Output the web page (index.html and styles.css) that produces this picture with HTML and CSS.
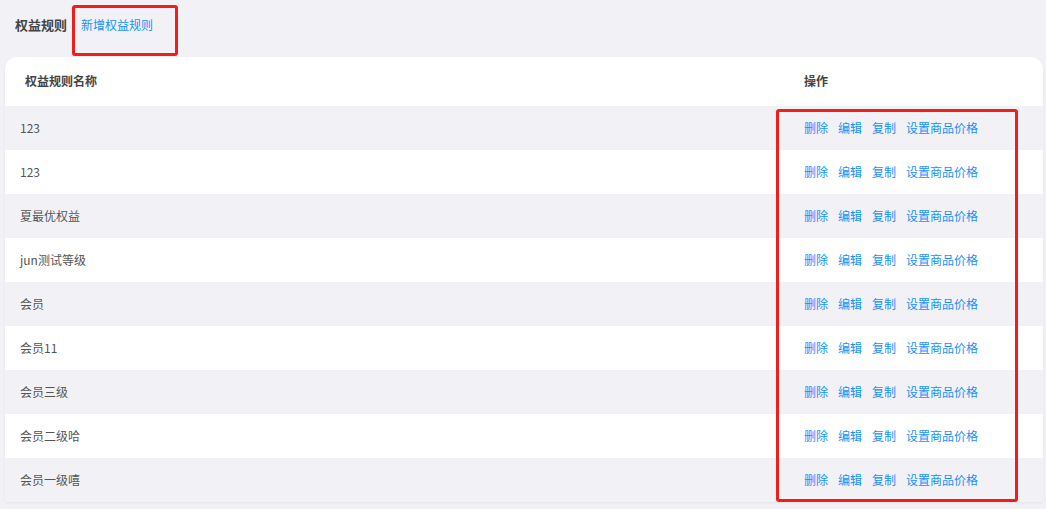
FILE: index.html
```html
<!DOCTYPE html>
<html lang="zh-CN">
  <head>
    <meta charset="UTF-8" />
    <meta name="viewport" content="width=device-width, initial-scale=1.0" />
    <title>权益规则</title>
    <link rel="stylesheet" href="styles.css">
  </head>
  <body>
    <div class="top">
      <span class="title">权益规则</span>
      <a class="add">新增权益规则</a>
    </div>

    <div class="card">
      <div class="row head">
        <div class="name">权益规则名称</div>
        <div class="ops">操作</div>
      </div>
      <div class="row odd">
        <div class="name">123</div>
        <div class="ops"><a>删除</a><a>编辑</a><a>复制</a><a>设置商品价格</a></div>
      </div>
      <div class="row">
        <div class="name">123</div>
        <div class="ops"><a>删除</a><a>编辑</a><a>复制</a><a>设置商品价格</a></div>
      </div>
      <div class="row odd">
        <div class="name">夏最优权益</div>
        <div class="ops"><a>删除</a><a>编辑</a><a>复制</a><a>设置商品价格</a></div>
      </div>
      <div class="row">
        <div class="name">jun测试等级</div>
        <div class="ops"><a>删除</a><a>编辑</a><a>复制</a><a>设置商品价格</a></div>
      </div>
      <div class="row odd">
        <div class="name">会员</div>
        <div class="ops"><a>删除</a><a>编辑</a><a>复制</a><a>设置商品价格</a></div>
      </div>
      <div class="row">
        <div class="name">会员11</div>
        <div class="ops"><a>删除</a><a>编辑</a><a>复制</a><a>设置商品价格</a></div>
      </div>
      <div class="row odd">
        <div class="name">会员三级</div>
        <div class="ops"><a>删除</a><a>编辑</a><a>复制</a><a>设置商品价格</a></div>
      </div>
      <div class="row">
        <div class="name">会员二级哈</div>
        <div class="ops"><a>删除</a><a>编辑</a><a>复制</a><a>设置商品价格</a></div>
      </div>
      <div class="row odd">
        <div class="name">会员一级嘻</div>
        <div class="ops"><a>删除</a><a>编辑</a><a>复制</a><a>设置商品价格</a></div>
      </div>
    </div>

    <div class="mark mark-add"></div>
    <div class="mark mark-ops"></div>
  </body>
</html>
```

FILE: styles.css
```css
* {
  margin: 0px;
  padding: 0px;
  box-sizing: border-box;
}

body {
  background-color: #f2f2f6;
  font-family: "Noto Sans CJK SC", "Noto Sans", sans-serif;
  font-size: 12px;
  color: #555;
  position: relative;
  height: 509px;
  overflow: hidden;
}

.top {
  height: 57px;
  display: flex;
  align-items: center;
  padding-left: 15px;
  padding-bottom: 8px;
}

.title {
  font-size: 13px;
  font-weight: bold;
  color: #444;
}

.add {
  margin-left: 14px;
  color: #1890ff;
}

.card {
  margin-left: 5px;
  margin-right: 3px;
  background-color: #fff;
  border-radius: 12px 12px 0px 0px;
  box-shadow: 0px 1px 3px rgba(0, 0, 0, 0.06);
}

.row {
  display: flex;
  align-items: center;
  height: 44px;
  padding-bottom: 2px;
}

.row.odd {
  background-color: #f2f2f6;
}

.row.head {
  height: 49px;
  font-weight: bold;
  color: #444;
}

.name {
  width: 799px;
  padding-left: 15px;
}

.head .name {
  padding-left: 20px;
}

.ops {
  display: flex;
  gap: 10px;
}

.ops a {
  color: #1890ff;
}

.mark {
  position: absolute;
  border: 3px solid #f01d1d;
  border-radius: 3px;
}

.mark-add {
  left: 72px;
  top: 5px;
  width: 106px;
  height: 51px;
}

.mark-ops {
  left: 776px;
  top: 109px;
  width: 242px;
  height: 393px;
}
```
